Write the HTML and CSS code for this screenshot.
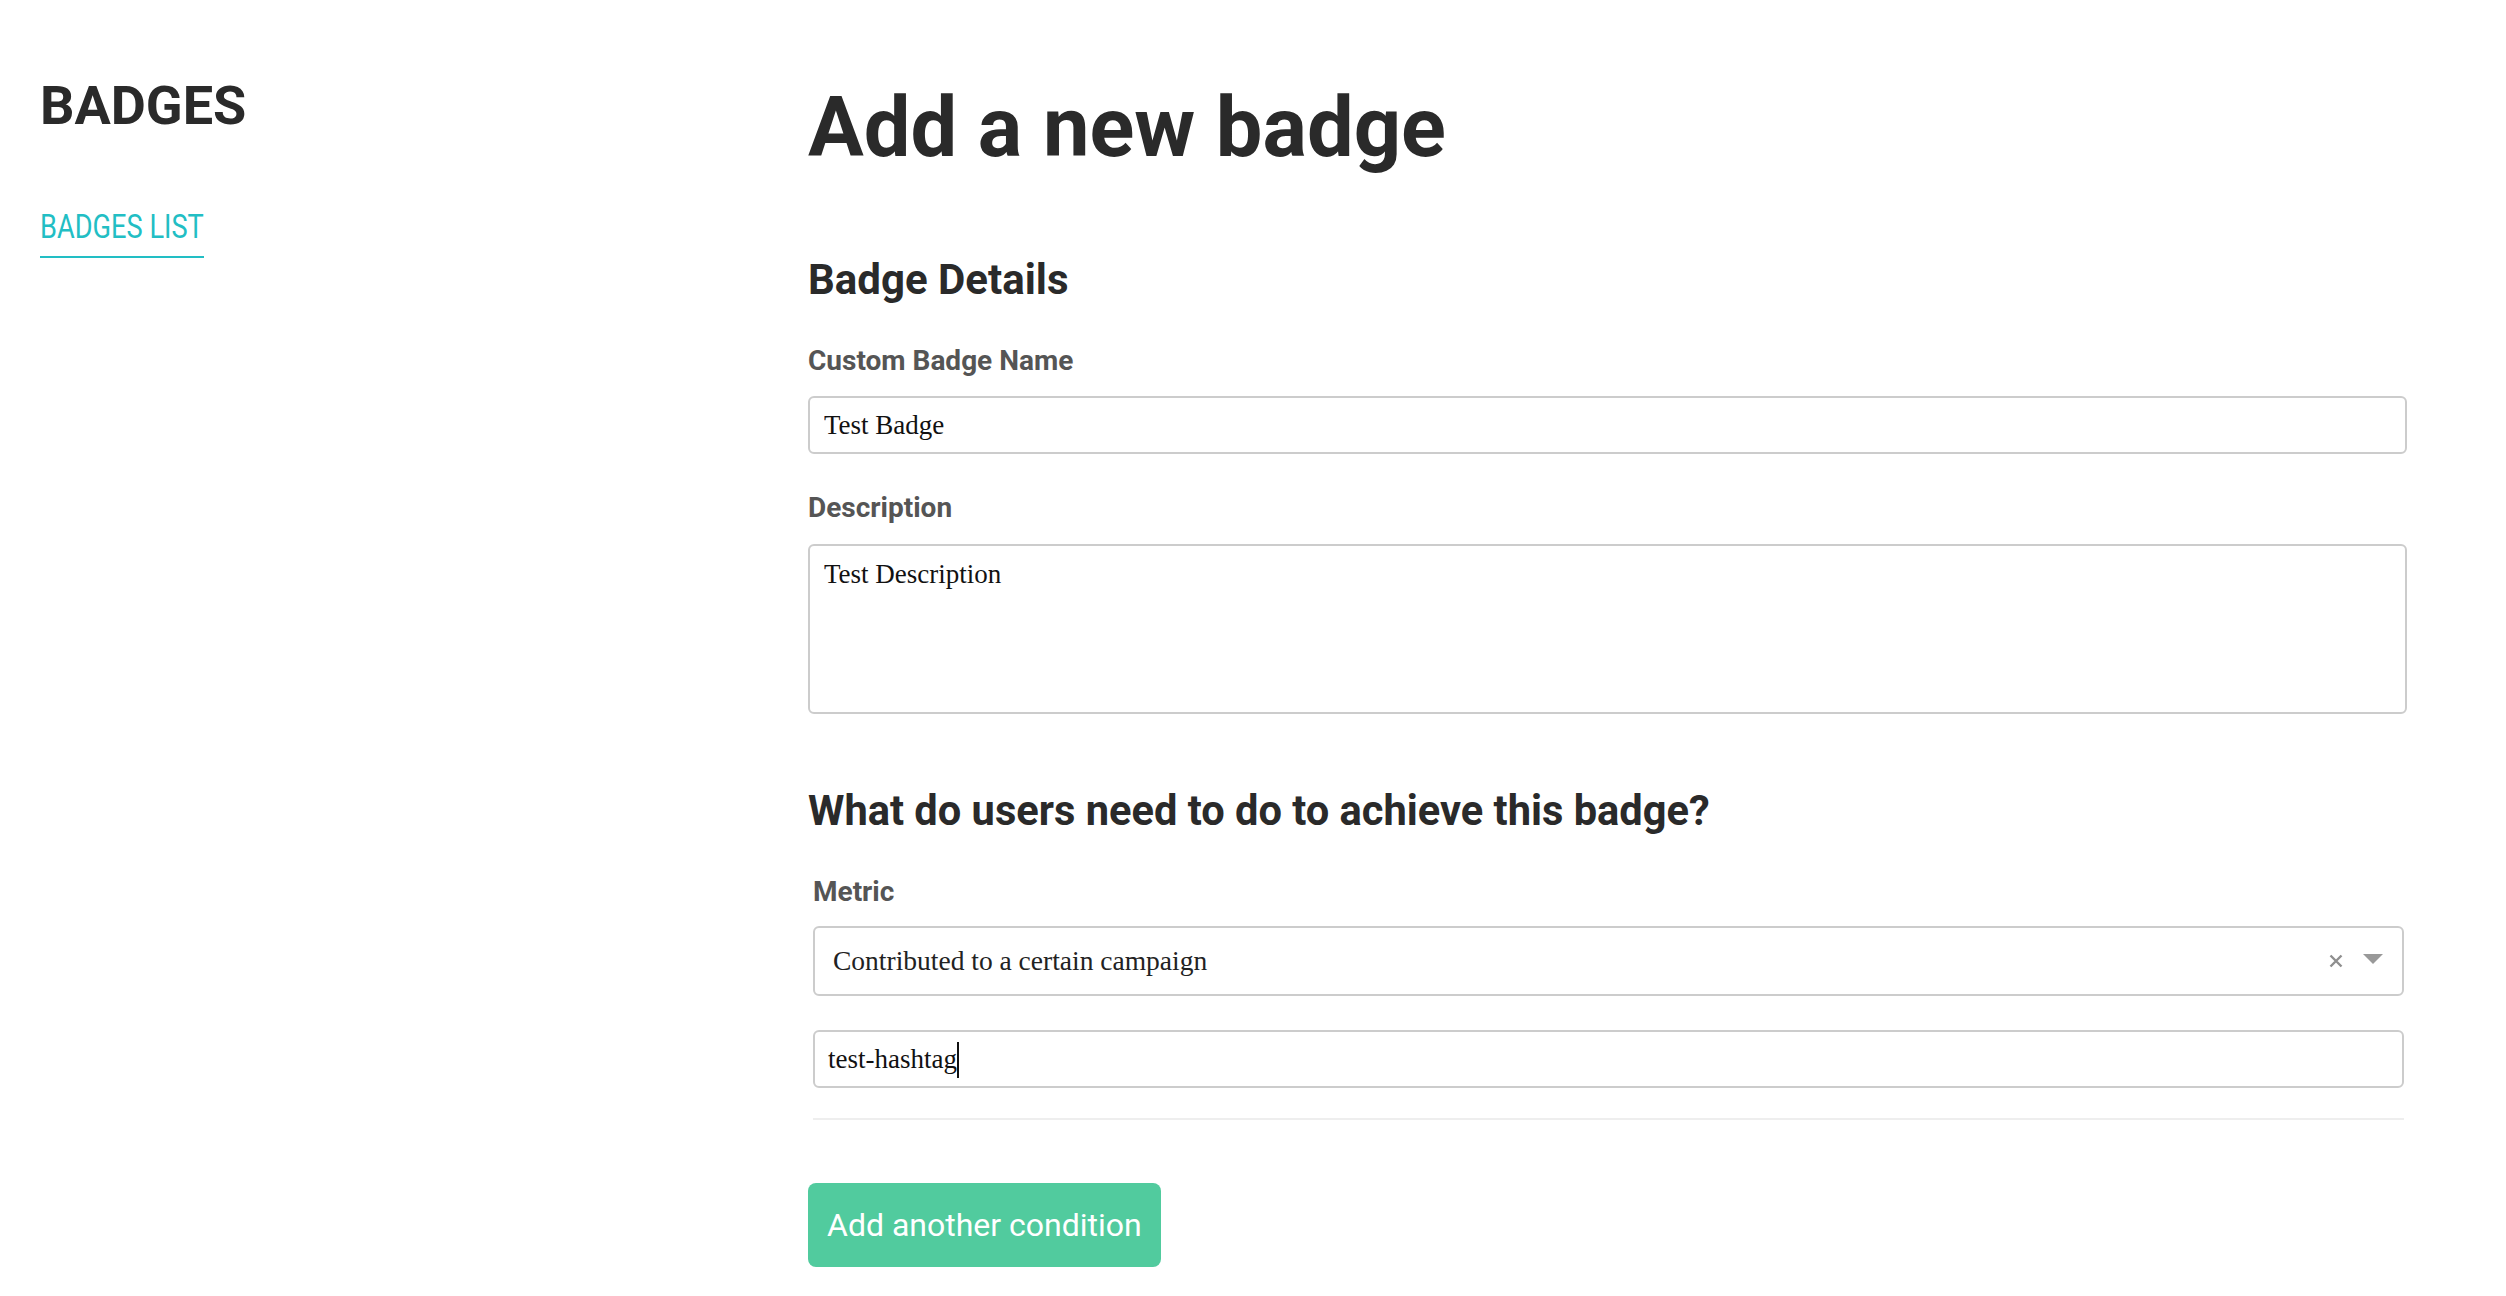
FILE: index.html
```html
<!DOCTYPE html>
<html lang="en">
<head>
<meta charset="utf-8">
<title>Add a new badge</title>
<link rel="stylesheet" href="styles.css">
</head>
<body>
<div class="page">
  <aside class="sidebar">
    <div class="brand">BADGES</div>
    <nav class="nav">
      <a class="nav-link" href="#">BADGES LIST</a>
    </nav>
  </aside>
  <main class="main">
    <h1 class="title">Add a new badge</h1>
    <h2 class="section-title">Badge Details</h2>
    <label class="field-label label-name">Custom Badge Name</label>
    <input class="text-input" type="text" value="Test Badge">
    <label class="field-label label-desc">Description</label>
    <textarea class="text-area">Test Description</textarea>
    <h2 class="section-title section-achieve">What do users need to do to achieve this badge?</h2>
    <div class="condition">
      <label class="field-label label-metric">Metric</label>
      <div class="select">
        <span class="select-value">Contributed to a certain campaign</span>
        <span class="select-clear">
          <svg width="14" height="14" viewBox="0 0 14 14"><path d="M1.5 1.5 L12.5 12.5 M12.5 1.5 L1.5 12.5" stroke="#8f8f8f" stroke-width="2.4" fill="none"/></svg>
        </span>
        <span class="select-arrow">
          <svg width="20" height="10" viewBox="0 0 20 10"><polygon points="0,0 20,0 10,10" fill="#999"/></svg>
        </span>
      </div>
      <div class="hashtag-input"><span class="hashtag-text">test-hashtag</span><span class="caret"></span></div>
      <div class="divider"></div>
    </div>
    <button class="btn-add" type="button">Add another condition</button>
  </main>
</div>
</body>
</html>
```

FILE: styles.css
```css
html, body {
  margin: 0;
  padding: 0;
  background: #ffffff;
}

body {
  font-family: Roboto, "Liberation Sans", sans-serif;
  color: #2a2a2a;
}

.page {
  display: grid;
  grid-template-columns: 768px 1599px;
  padding-left: 40px;
  height: 1296px;
  box-sizing: border-box;
  overflow: hidden;
}

.sidebar {
  padding-top: 79px;
  display: flex;
  flex-direction: column;
  align-items: flex-start;
}

.brand {
  font-size: 54px;
  line-height: 1;
  font-weight: 700;
  color: #2a2a2a;
}

.nav {
  margin-top: 76px;
}

.nav-link {
  display: inline-block;
  font-size: 34px;
  line-height: 1;
  font-weight: 400;
  color: #22bec4;
  text-decoration: none;
  padding-bottom: 13px;
  border-bottom: 2px solid #22bec4;
  transform: scaleX(0.8);
  transform-origin: left center;
  white-space: nowrap;
}

.main {
  padding-top: 86px;
  display: flex;
  flex-direction: column;
  align-items: stretch;
}

.title {
  margin: 0;
  font-size: 83px;
  line-height: 1;
  font-weight: 700;
  color: #2a2a2a;
}

.section-title {
  margin: 90px 0 0 0;
  font-size: 42px;
  line-height: 1;
  font-weight: 700;
  color: #2a2a2a;
}

.section-achieve {
  margin-top: 76px;
  font-size: 41.6px;
}

.field-label {
  display: block;
  font-size: 28px;
  line-height: 1;
  font-weight: 700;
  color: #555555;
}

.label-name {
  margin-top: 46px;
}

.label-desc {
  margin-top: 40px;
}

.text-input,
.text-area,
.select,
.hashtag-input {
  box-sizing: border-box;
  border: 2px solid #cccccc;
  border-radius: 6px;
  background: #ffffff;
  font-family: "Liberation Serif", "Times New Roman", serif;
  font-size: 27px;
  color: #111111;
  outline: none;
}

.text-input {
  margin-top: 21px;
  height: 58px;
  padding: 1px 14px 0 14px;
  width: 100%;
}

.text-area {
  margin-top: 22px;
  height: 170px;
  padding: 13px 14px;
  width: 100%;
  resize: none;
  line-height: normal;
}

.condition {
  margin: 46px 3px 0 5px;
  display: flex;
  flex-direction: column;
}

.select {
  margin-top: 20px;
  height: 70px;
  padding: 0 19px 0 18px;
  display: flex;
  align-items: center;
  font-size: 27.5px;
}

.select-value {
  flex: 1;
  color: #222222;
}

.select-clear {
  display: flex;
  align-items: center;
  margin-right: 20px;
}

.select-arrow {
  display: flex;
  align-items: center;
  margin-top: -4px;
}

.hashtag-input {
  margin-top: 34px;
  height: 58px;
  padding: 2px 13px 0 13px;
  display: flex;
  align-items: center;
}

.hashtag-text {
  color: #111111;
}

.caret {
  display: inline-block;
  width: 2px;
  height: 36px;
  background: #111111;
}

.divider {
  margin-top: 30px;
  height: 2px;
  background: #eeeeee;
}

.btn-add {
  margin-top: 63px;
  align-self: flex-start;
  height: 84px;
  padding: 0 19px;
  border: none;
  border-radius: 8px;
  background: #51cb9e;
  color: #ffffff;
  font-family: Roboto, "Liberation Sans", sans-serif;
  font-size: 32px;
  font-weight: 400;
  line-height: 1;
  cursor: pointer;
}
```
